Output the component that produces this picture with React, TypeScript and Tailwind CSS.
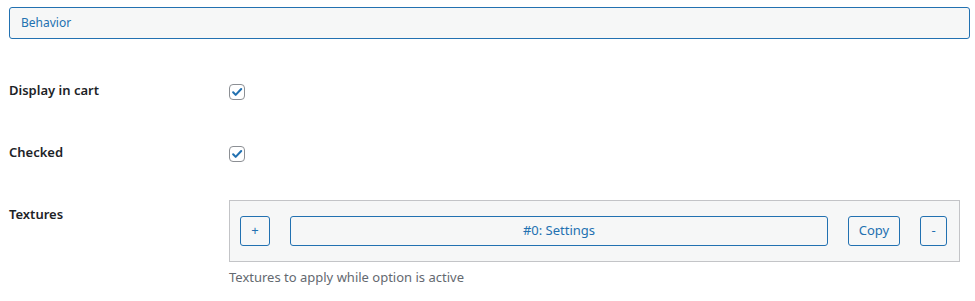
import React from "react";

const Check = () => (
  <span className="flex h-4 w-4 items-center justify-center rounded-[4px] border border-[#8c8f94] bg-white">
    <svg viewBox="0 0 20 20" className="h-[16px] w-[16px]">
      <path d="M4.5 10.5l3.6 3.6L16 5.8" fill="none" stroke="#2271b1" strokeWidth="3" strokeLinecap="round" strokeLinejoin="round" />
    </svg>
  </span>
);

const Btn = ({ children, className = "" }: { children: React.ReactNode; className?: string }) => (
  <div
    className={`flex h-[30px] shrink-0 items-center justify-center rounded-[3px] border border-[#2271b1] bg-[#f6f7f7] text-[13px] text-[#2271b1] ${className}`}
  >
    {children}
  </div>
);

export default function App() {
  return (
    <div className="w-[975px] h-[301px] bg-white px-[9px] pt-[7px] font-['Noto_Sans',sans-serif] text-[#1d2327]">
      <div className="flex h-[32px] w-[961px] items-center rounded-[3px] border border-[#2271b1] bg-[#f6f7f7] pl-[11px] text-[12px] text-[#2271b1]">
        Behavior
      </div>
      <div className="mt-[43px] flex">
        <div className="w-[220px] text-[13px] font-semibold leading-[16px]">Display in cart</div>
        <div className="pt-[2px]"><Check /></div>
      </div>
      <div className="mt-[44px] flex">
        <div className="w-[220px] text-[13px] font-semibold leading-[16px]">Checked</div>
        <div className="pt-[2px]"><Check /></div>
      </div>
      <div className="mt-[38px] flex">
        <div className="w-[220px] pt-[6px] text-[13px] font-semibold leading-[16px]">Textures</div>
        <div>
          <div className="flex h-[62px] w-[731px] items-center border border-[#c3c4c7] bg-[#f6f7f7] pl-[10px]">
            <Btn className="w-[30px]">+</Btn>
            <Btn className="ml-[20px] w-[538px]">#0: Settings</Btn>
            <Btn className="ml-[20px] w-[52px]">Copy</Btn>
            <Btn className="ml-[20px] w-[27px]">-</Btn>
          </div>
          <div className="mt-[6px] text-[13px] text-[#646970]">Textures to apply while option is active</div>
        </div>
      </div>
    </div>
  );
}
